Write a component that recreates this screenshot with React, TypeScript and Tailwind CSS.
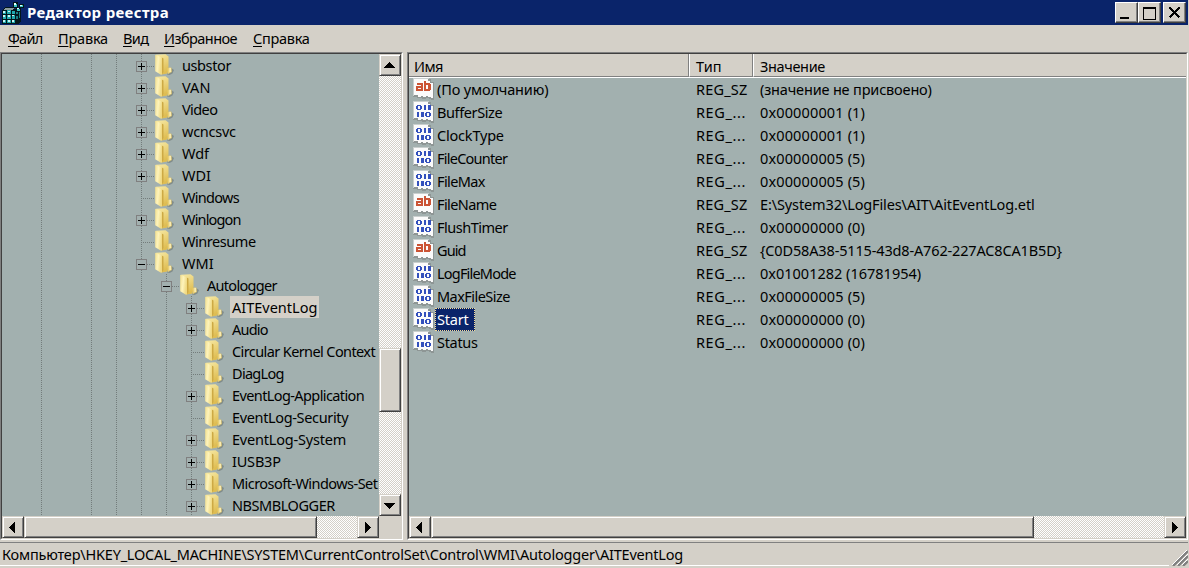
import { ReactNode } from "react";

type TreeItem = {
  name: string;
  depth: number;
  state?: "open" | "closed";
  selected?: boolean;
  tracking?: number;
};

const tree: TreeItem[] = [
  { name: "usbstor", depth: 0, state: "closed", tracking: -0.4 },
  { name: "VAN", depth: 0, state: "closed" },
  { name: "Video", depth: 0, state: "closed", tracking: -0.6 },
  { name: "wcncsvc", depth: 0, state: "closed", tracking: -0.25 },
  { name: "Wdf", depth: 0, state: "closed" },
  { name: "WDI", depth: 0, state: "closed" },
  { name: "Windows", depth: 0, tracking: -0.7 },
  { name: "Winlogon", depth: 0, state: "closed", tracking: -0.85 },
  { name: "Winresume", depth: 0, tracking: -0.45 },
  { name: "WMI", depth: 0, state: "open", tracking: 0.1 },
  { name: "Autologger", depth: 1, state: "open", tracking: -0.7 },
  { name: "AITEventLog", depth: 2, state: "closed", selected: true },
  { name: "Audio", depth: 2, state: "closed", tracking: -0.8 },
  { name: "Circular Kernel Context", depth: 2, tracking: -0.6 },
  { name: "DiagLog", depth: 2, tracking: -0.7 },
  { name: "EventLog-Application", depth: 2, state: "closed", tracking: -0.6 },
  { name: "EventLog-Security", depth: 2, tracking: -0.35 },
  { name: "EventLog-System", depth: 2, state: "closed", tracking: -0.2 },
  { name: "IUSB3P", depth: 2, state: "closed", tracking: -0.2 },
  { name: "Microsoft-Windows-Set", depth: 2, state: "closed", tracking: -0.55 },
  { name: "NBSMBLOGGER", depth: 2, state: "closed", tracking: -0.45 },
];

const values = [
  { name: "(По умолчанию)", type: "REG_SZ", data: "(значение не присвоено)", tracking: -0.15, dataTracking: -0.17 },
  { name: "BufferSize", type: "REG_...", data: "0x00000001 (1)", tracking: -0.4, dataTracking: 0.14 },
  { name: "ClockType", type: "REG_...", data: "0x00000001 (1)", tracking: -0.2, dataTracking: 0.14 },
  { name: "FileCounter", type: "REG_...", data: "0x00000005 (5)", tracking: -0.75, dataTracking: 0.14 },
  { name: "FileMax", type: "REG_...", data: "0x00000005 (5)", tracking: -0.6, dataTracking: 0.14 },
  { name: "FileName", type: "REG_SZ", data: "E:\\System32\\LogFiles\\AIT\\AitEventLog.etl", tracking: -0.6, dataTracking: -0.12 },
  { name: "FlushTimer", type: "REG_...", data: "0x00000000 (0)", tracking: -0.5, dataTracking: 0.14 },
  { name: "Guid", type: "REG_SZ", data: "{C0D58A38-5115-43d8-A762-227AC8CA1B5D}", tracking: -0.9, dataTracking: -0.15 },
  { name: "LogFileMode", type: "REG_...", data: "0x01001282 (16781954)", tracking: -0.8, dataTracking: 0 },
  { name: "MaxFileSize", type: "REG_...", data: "0x00000005 (5)", tracking: -0.55, dataTracking: 0.14 },
  { name: "Start", type: "REG_...", data: "0x00000000 (0)", tracking: -0.2, dataTracking: 0.14, selected: true },
  { name: "Status", type: "REG_...", data: "0x00000000 (0)", tracking: -0.3, dataTracking: 0.14 },
];

const menu = [
  { label: "Файл", width: "w-[34px]", tracking: -0.75 },
  { label: "Правка", width: "w-[49px]", tracking: -0.2 },
  { label: "Вид", width: "w-[25px]", tracking: -0.6 },
  { label: "Избранное", width: "w-[73px]", tracking: -0.55 },
  { label: "Справка", width: "w-[56px]", tracking: -0.3 },
];

const raised =
  "border border-t-[#d4d0c8] border-l-[#d4d0c8] border-r-[#404040] border-b-[#404040] bg-[#d4d0c8] shadow-[inset_1px_1px_0_#fff,inset_-1px_-1px_0_#808080]";
const track =
  "bg-[repeating-conic-gradient(#ffffff_0_25%,#d4d0c8_0_50%)] bg-size-[2px_2px]";

function RegeditIcon() {
  return (
    <svg width="22" height="22" viewBox="0 0 22 22" shapeRendering="crispEdges">
      <path d="M3 5h9v2h7v12l-3 3H0V8z" fill="#03171c" />
      <path d="M4 6h8l-2 2H1z" fill="#8c9c9c" />
      <path
        d="M1 9h3v3H1zM5 8h4v4H5zM10 9h3v3h-3zM1 13h3v4H1zM5 13h4v4H5zM10 13h3v4h-3zM1 18h3v3H1zM5 18h4v3H5zM10 18h3v3h-3z"
        fill="#1fa9ad"
      />
      <path d="M1 9h2v2H1zM6 9h2v1H6zM1 13h2v2H1zM6 13h2v2H6zM10 13h2v1h-2zM1 18h2v2H1zM6 18h2v2H6zM10 18h2v2h-2z" fill="#c9f4f2" />
      <path d="M14 9h2v3h-2zM14 14h2v3h-2zM17 10h1v6h-1z" fill="#177d82" />
      <path d="M11 0h5v6h-5zM17 2h5v4h-5zM14 6h5v4h-5z" fill="#03171c" />
      <path d="M12 2h3v3h-3zM18 3h3v2h-3zM15 7h3v2h-3z" fill="#37c4c6" />
      <path d="M12 1h2v2h-2zM18 3h2v1h-2zM15 6h2v1h-2z" fill="#e5ffff" />
    </svg>
  );
}

function FolderIcon() {
  return (
    <svg width="22" height="22" viewBox="0 0 22 22" className="shrink-0">
      <defs>
        <linearGradient id="cover" x1="0" x2="1" y1="0" y2=".3">
          <stop offset="0" stopColor="#f3df8c" />
          <stop offset=".5" stopColor="#fdf3bb" />
          <stop offset="1" stopColor="#efd983" />
        </linearGradient>
        <linearGradient id="back" x1="0" y1="0" x2=".3" y2="1">
          <stop offset="0" stopColor="#f7eaa6" />
          <stop offset="1" stopColor="#dfbd52" />
        </linearGradient>
      </defs>
      <path d="M13 20.5l4-6.5 3 2-1.5 3.5-3 1.5z" fill="#66706b" opacity=".55" />
      <path d="M2 .8L11.5 .2 14.5 2.5V14l-1 5.5-6 1z" fill="url(#back)" />
      <path d="M13.5 14.5l2.5-1.2 1.5.7.3 4-3.8 2z" fill="#e9cf74" />
      <path d="M15.5 14h1.2v4h-1.2z" fill="#fff6cc" />
      <path d="M7.8 3.6l1.7.9v13.5l-1.7 2.4z" fill="#cda944" />
      <path d="M1.2 .8l6.8 2.8v16.9l-1 .2-5.8-3.5z" fill="url(#cover)" />
    </svg>
  );
}

function ValueIcon({ text }: { text: boolean }) {
  return (
    <svg width="22" height="22" viewBox="0 0 22 22" className="shrink-0" shapeRendering="crispEdges">
      <path d="M0 0h16v1h2v3h3v18h-3v-1h-2v-1h-3v1H9v-1H4v-1H0z" fill="#8e9695" />
      <path d="M0 0h16v1H1v17H0z" fill="#c9cfce" />
      <path d="M1 1h14v2h2v2h3v15h-2v-1h-3v-1h-2v1h-3v-1H8v1H5v-2H1z" fill="#fbfbfb" />
      {text ? (
        <g fill="#cb5435">
          <path fillRule="evenodd" d="M4 5h6v8H3V8h5V7H4zM5 10v1h3v-1z" />
          <path fillRule="evenodd" d="M11 3h2v2h4v1h1v6h-1v1h-6zM13 7v4h2V7z" />
        </g>
      ) : (
        <g fill="#3350bd">
          <path fillRule="evenodd" d="M4 4h4v1h1v3H8v1H4V8H3V5h1zM5 5v3h2V5z" />
          <path d="M11 4h2v5h-2zM15 4h3v5h-3zM4 11h2v5H4zM8 11h3v5H8z" />
          <path fillRule="evenodd" d="M13 11h4v1h1v3h-1v1h-4v-1h-1v-3h1zM14 12v3h2v-3z" />
        </g>
      )}
    </svg>
  );
}

function Guide() {
  return (
    <svg width="25" height="22" className="shrink-0" shapeRendering="crispEdges">
      <path d="M12.5 0v22" stroke="#737c7b" strokeDasharray="1 1" />
    </svg>
  );
}

function Node({ state }: { state?: "open" | "closed" }) {
  return (
    <svg width="25" height="22" className="shrink-0" shapeRendering="crispEdges">
      <path d="M12.5 0v22M12 12.5h14" stroke="#737c7b" strokeDasharray="1 1" />
      {state && <rect x="7.5" y="7.5" width="10" height="10" fill="#a2b0af" stroke="#808080" />}
      {state && <path d="M9 12.5h7" stroke="#000" />}
      {state === "closed" && <path d="M12.5 9v7" stroke="#000" />}
    </svg>
  );
}

function ScrollButton({ dir }: { dir: "up" | "down" | "left" | "right" }) {
  const arrows = {
    up: "M9 7h1v1h1v1h1v1h1v1h1v1h1v1H4v-1h1v-1h1v-1h1V9h1V8h1z",
    down: "M4 8h11v1h-1v1h-1v1h-1v1h-1v1h-1v1H9v-1H8v-1H7v-1H6v-1H5V9H4z",
    left: "M12 5v11h-1v-1h-1v-1H9v-1H8v-1H7v-1H6v-1h1V9h1V8h1V7h1V6h1V5z",
    right: "M7 5h1v1h1v1h1v1h1v1h1v1h1v1h-1v1h-1v1h-1v1H9v1H8v1H7z",
  };
  return (
    <div className={`size-[22px] shrink-0 ${raised}`}>
      <svg width="20" height="20" viewBox="0 0 20 20" shapeRendering="crispEdges">
        <path d={arrows[dir]} />
      </svg>
    </div>
  );
}

function TitleButton({ children }: { children: ReactNode }) {
  return (
    <button className="h-[21px] w-[23px] border border-t-white border-l-white border-r-[#404040] border-b-[#404040] bg-[#d4d0c8] shadow-[inset_-1px_-1px_0_#808080]">
      <svg
        width="21"
        height="19"
        viewBox="0 0 21 19"
        shapeRendering="crispEdges"
        fill="none"
        stroke="#000"
        strokeWidth="2"
      >
        {children}
      </svg>
    </button>
  );
}

function TreePane() {
  return (
    <div className="flex h-[488px] w-[403px] flex-col border border-t-[#808080] border-l-[#808080] border-r-white border-b-white">
      <div className="flex grow flex-col border border-t-[#404040] border-l-[#404040] border-r-[#d4d0c8] border-b-[#d4d0c8]">
        <div className="flex h-[462px]">
          <div className="w-[377px] overflow-hidden bg-[#a2b0af]">
            {tree.map((item) => (
              <div key={item.name} className="flex h-[22px] pl-[27px]">
                <Guide />
                <div className="w-[25px] shrink-0" />
                <Guide />
                <Guide />
                {item.depth > 0 && <Guide />}
                {item.depth > 1 && <Guide />}
                <Node state={item.state} />
                <FolderIcon />
                <span
                  className={`ml-1 h-[22px] pl-0.5 leading-[22px] whitespace-nowrap ${item.selected ? "bg-[#d4d0c8] pr-0.5" : ""}`}
                  style={{ letterSpacing: item.tracking }}
                >
                  {item.name}
                </span>
              </div>
            ))}
          </div>
          <div className={`flex w-[22px] flex-col ${track}`}>
            <ScrollButton dir="up" />
            <div className="grow" />
            <div className={`h-[64px] ${raised}`} />
            <div className="h-[82px]" />
            <ScrollButton dir="down" />
          </div>
        </div>
        <div className="flex h-[22px] bg-[#d4d0c8]">
          <div className={`flex w-[377px] ${track}`}>
            <ScrollButton dir="left" />
            <div className={`w-[293px] ${raised}`} />
            <div className="grow" />
            <ScrollButton dir="right" />
          </div>
        </div>
      </div>
    </div>
  );
}

function ValuePane() {
  return (
    <div className="flex h-[488px] w-[781px] flex-col border border-t-[#808080] border-l-[#808080] border-r-white border-b-white">
      <div className="flex grow flex-col border border-t-[#404040] border-l-[#404040] border-r-[#d4d0c8] border-b-[#d4d0c8]">
        <div className="flex h-6 border-b border-white bg-[#d4d0c8] leading-[25px]">
          <div className="w-[280px] border-r border-b border-[#808080] pl-[5px] tracking-[-0.5px]">Имя</div>
          <div className="w-[64px] border-r border-b border-l border-r-[#808080] border-b-[#808080] border-l-white pl-1.5">
            Тип
          </div>
          <div className="grow border-b border-l border-b-[#808080] border-l-white pl-1.5 tracking-[-0.35px]">
            Значение
          </div>
        </div>
        <div className="h-[438px] bg-[#a2b0af]">
          {values.map((v) => (
            <div key={v.name} className="flex h-[23px] pl-1 leading-[23px]">
              <div className="flex w-[283px]">
                <ValueIcon text={v.type === "REG_SZ"} />
                <span
                  className={
                    v.selected
                      ? "border border-dotted border-[#f5db95] bg-[#0a246a] pr-[5px] pl-px leading-[21px] text-white"
                      : "pl-0.5"
                  }
                  style={{ letterSpacing: v.tracking }}
                >
                  {v.name}
                </span>
              </div>
              <span className={v.type === "REG_SZ" ? "w-[64px] tracking-[0.2px]" : "w-[64px] tracking-[0.6px]"}>
                {v.type}
              </span>
              <span style={{ letterSpacing: v.dataTracking }}>{v.data}</span>
            </div>
          ))}
        </div>
        <div className={`flex h-[22px] ${track}`}>
          <ScrollButton dir="left" />
          <div className={`w-[603px] ${raised}`} />
          <div className="grow" />
          <ScrollButton dir="right" />
        </div>
      </div>
    </div>
  );
}

export default function App() {
  return (
    <div className="h-[568px] w-[1189px] overflow-hidden bg-[#d4d0c8] font-['Noto_Sans',sans-serif] text-[14.5px] text-black">
      <header className="mr-px flex h-[25px] items-center bg-[#0a246a] pr-[2px] pl-[2px]">
        <RegeditIcon />
        <h1 className="ml-[3px] text-[15px] font-bold tracking-[0.33px] text-white">Редактор реестра</h1>
        <div className="ml-auto flex">
          <TitleButton>
            <path d="M4 15h9" />
          </TitleButton>
          <TitleButton>
            <path d="M4 5h13" />
            <path d="M4.5 5v11.5h12V5" strokeWidth="1" />
          </TitleButton>
          <div className="w-0.5" />
          <TitleButton>
            <path d="M5.5 4.5l10 10M15.5 4.5l-10 10" />
          </TitleButton>
        </div>
      </header>
      <nav className="flex h-[27px] gap-4 pl-2 leading-[27px]">
        {menu.map(({ label, width, tracking }) => (
          <span key={label} className={`whitespace-nowrap ${width}`} style={{ letterSpacing: tracking }}>
            <span className="underline underline-offset-2">{label[0]}</span>
            {label.slice(1)}
          </span>
        ))}
      </nav>
      <main className="flex gap-1">
        <TreePane />
        <ValuePane />
      </main>
      <footer className="mt-[2px] flex h-6">
        <div className="w-[1169px] border-t border-b border-t-[#808080] border-b-white pl-0.5 leading-[23px] tracking-[-0.2px]">
          Компьютер\HKEY_LOCAL_MACHINE\SYSTEM\CurrentControlSet\Control\WMI\Autologger\AITEventLog
        </div>
        <div className="flex w-[19px] items-end border-t border-[#808080] pl-[3px]">
          <svg width="16" height="16" viewBox="0 0 16 16">
            <path d="M1 16L16 1M6 16L16 6M11 16l5-5" stroke="#808080" strokeWidth="2.4" />
            <path d="M0 15L15 0M5 15L16 4M10 15l6-6" stroke="#fff" />
          </svg>
        </div>
      </footer>
    </div>
  );
}
